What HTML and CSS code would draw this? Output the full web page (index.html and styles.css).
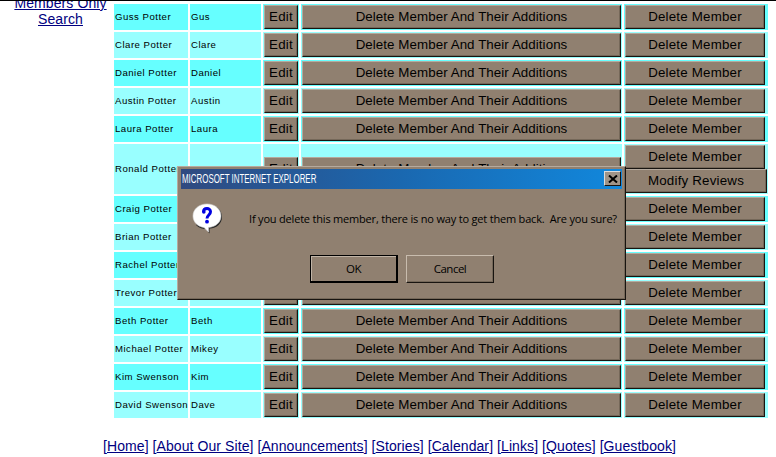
FILE: index.html
```html
<!DOCTYPE html>
<html lang="en">
<head>
<meta charset="utf-8">
<title>Members</title>
<link rel="stylesheet" href="styles.css">
</head>
<body>
<div class="page">
<div class="main">
<nav class="side"><a href="#">Members Only</a><a href="#">Search</a></nav>
<div class="members">
<div class="row"><div>Guss Potter</div><div>Gus</div><div><button>Edit</button></div><div><button class="all">Delete Member And Their Additions</button></div><div><button class="del">Delete Member</button></div></div>
<div class="row"><div>Clare Potter</div><div>Clare</div><div><button>Edit</button></div><div><button class="all">Delete Member And Their Additions</button></div><div><button class="del">Delete Member</button></div></div>
<div class="row"><div>Daniel Potter</div><div>Daniel</div><div><button>Edit</button></div><div><button class="all">Delete Member And Their Additions</button></div><div><button class="del">Delete Member</button></div></div>
<div class="row"><div>Austin Potter</div><div>Austin</div><div><button>Edit</button></div><div><button class="all">Delete Member And Their Additions</button></div><div><button class="del">Delete Member</button></div></div>
<div class="row"><div>Laura Potter</div><div>Laura</div><div><button>Edit</button></div><div><button class="all">Delete Member And Their Additions</button></div><div><button class="del">Delete Member</button></div></div>
<div class="row tall"><div>Ronald Potter</div><div>Ron</div><div><button>Edit</button></div><div><button class="all">Delete Member And Their Additions</button></div><div><button class="del">Delete Member</button><button>Modify Reviews</button></div></div>
<div class="row"><div>Craig Potter</div><div>Craig</div><div><button>Edit</button></div><div><button class="all">Delete Member And Their Additions</button></div><div><button class="del">Delete Member</button></div></div>
<div class="row"><div>Brian Potter</div><div>Brian</div><div><button>Edit</button></div><div><button class="all">Delete Member And Their Additions</button></div><div><button class="del">Delete Member</button></div></div>
<div class="row"><div>Rachel Potter</div><div>Rachel</div><div><button>Edit</button></div><div><button class="all">Delete Member And Their Additions</button></div><div><button class="del">Delete Member</button></div></div>
<div class="row"><div>Trevor Potter</div><div>Trevor</div><div><button>Edit</button></div><div><button class="all">Delete Member And Their Additions</button></div><div><button class="del">Delete Member</button></div></div>
<div class="row"><div>Beth Potter</div><div>Beth</div><div><button>Edit</button></div><div><button class="all">Delete Member And Their Additions</button></div><div><button class="del">Delete Member</button></div></div>
<div class="row"><div>Michael Potter</div><div>Mikey</div><div><button>Edit</button></div><div><button class="all">Delete Member And Their Additions</button></div><div><button class="del">Delete Member</button></div></div>
<div class="row"><div>Kim Swenson</div><div>Kim</div><div><button>Edit</button></div><div><button class="all">Delete Member And Their Additions</button></div><div><button class="del">Delete Member</button></div></div>
<div class="row"><div>David Swenson</div><div>Dave</div><div><button>Edit</button></div><div><button class="all">Delete Member And Their Additions</button></div><div><button class="del">Delete Member</button></div></div>
</div>
</div>
<footer>[<a href="#">Home</a>] [<a href="#">About Our Site</a>] [<a href="#">Announcements</a>] [<a href="#">Stories</a>] [<a href="#">Calendar</a>] [<a href="#">Links</a>] [<a href="#">Quotes</a>] [<a href="#">Guestbook</a>]</footer>
<div class="dialog" role="dialog">
<div class="titlebar"><span class="caption">MICROSOFT INTERNET EXPLORER</span><span class="close"><svg width="10" height="8" viewBox="0 0 10 8"><path d="M1 0.5L9 7.5M9 0.5L1 7.5" stroke="#000" stroke-width="2"/></svg></span></div>
<div class="message">
<svg width="32" height="32" viewBox="0 0 32 32"><path d="M4 22C7 25 11 26 14 26L17.5 30.5V25.5C25 25.5 30 20 30 14C30 9 27 5 24 4" fill="#222"/><path d="M15 1C7 1 1 6 1 13C1 19 6 24 12 24.5L16.5 29V24.5C24 24 29 19 29 13C29 6 23 1 15 1Z" fill="#fff" stroke="#d8d8d8" stroke-width=".6"/><path d="M11.5 9C11.5 4.5 18.5 4.5 18.5 8.8C18.5 12 15 12 15 15.5" fill="none" stroke="#0000e0" stroke-width="3"/><circle cx="11.8" cy="9" r="1.8" fill="#0000e0"/><circle cx="15" cy="18.7" r="1.9" fill="#0000e0"/></svg>
<p>If you delete this member, there is no way to get them back.&nbsp; Are you sure?</p>
</div>
<div class="actions"><span class="ok">OK</span><span>Cancel</span></div>
</div>
</div>
</body>
</html>
```
FILE: styles.css
```css
* { box-sizing: border-box; }
body { margin: 0; background: #fff; font-family: "Liberation Sans", Arial, sans-serif; color: #000; }
.page { position: relative; width: 776px; height: 457px; overflow: hidden; border-top: 1px solid #000; }
.main { display: flex; }
.side { width: 114px; padding: 0 0 0 7px; margin-top: -6px; text-align: center; font-size: 14px; line-height: 16px; letter-spacing: .1px; }
.side a { display: block; }
a { color: #000080; text-decoration: underline; }
.members { display: flex; flex-direction: column; gap: 2px; padding-top: 3px; }
.row { display: grid; grid-template-columns: 74px 71px 36px 321px 144px; column-gap: 2px; height: 26px; }
.row.tall { height: 50px; }
.row > div { background: #66ffff; display: flex; flex-direction: column; justify-content: center; padding: 0 1px 1px; font-size: 9.6px; letter-spacing: .5px; white-space: nowrap; }
.row:nth-child(even) > div { background: #99ffff; }
.row > div:nth-child(n+3) { padding-bottom: 0; letter-spacing: 0; }
button { display: block; width: 100%; height: 24px; padding: 0 0 1px; margin: 0; background: #908070; border: 1px solid; border-color: #b5aa9e #181410 #181410 #b5aa9e; box-shadow: inset -1px -1px #756859; border-radius: 0; font: 13.33px/20px "Liberation Sans", Arial, sans-serif; letter-spacing: .2px; color: #000; white-space: nowrap; }
button.all { letter-spacing: .07px; }
button.del { width: 140px; }
footer { margin: 18px 0 0 103px; font-size: 14px; line-height: 20px; letter-spacing: .08px; color: #000080; white-space: nowrap; }
.dialog { position: absolute; left: 177px; top: 165px; width: 449px; height: 134px; padding: 2px 3px; background: #908070; border: 1px solid; border-color: #b5aa9e #181410 #181410 #b5aa9e; box-shadow: inset -1px -1px #756859; }
.titlebar { display: flex; align-items: center; justify-content: space-between; height: 20px; padding: 0 1px 0 1px; background: linear-gradient(90deg, #304a80, #1a68b0 50%, #1188dd); }
.caption { font-size: 12px; line-height: 18px; color: #fff; transform: scaleX(.66); transform-origin: left; white-space: nowrap; }
.close { display: flex; align-items: center; justify-content: center; width: 17px; height: 15px; margin-top: -1px; background: #a09488; border: 1px solid; border-color: #ddd #181410 #181410 #ddd; }
.message { display: flex; height: 66px; padding: 14px 0 0 11px; }
.message p { margin: 8px 0 0 25px; font: 11px/16px "Open Sans", sans-serif; white-space: nowrap; letter-spacing: -.19px; }
.actions { display: flex; gap: 8px; padding-left: 129px; }
.actions span { width: 88px; height: 28px; font: 11.5px/25px "Open Sans", sans-serif; letter-spacing: -.5px; text-align: center; border: 1px solid; border-color: #c8bcae #181410 #181410 #c8bcae; box-shadow: inset -1px -1px #756859; }
.actions .ok { border: 1px solid #000; border-width: 1px 2px 2px 1px; box-shadow: inset 1px 1px #c0b4a6; }
```
